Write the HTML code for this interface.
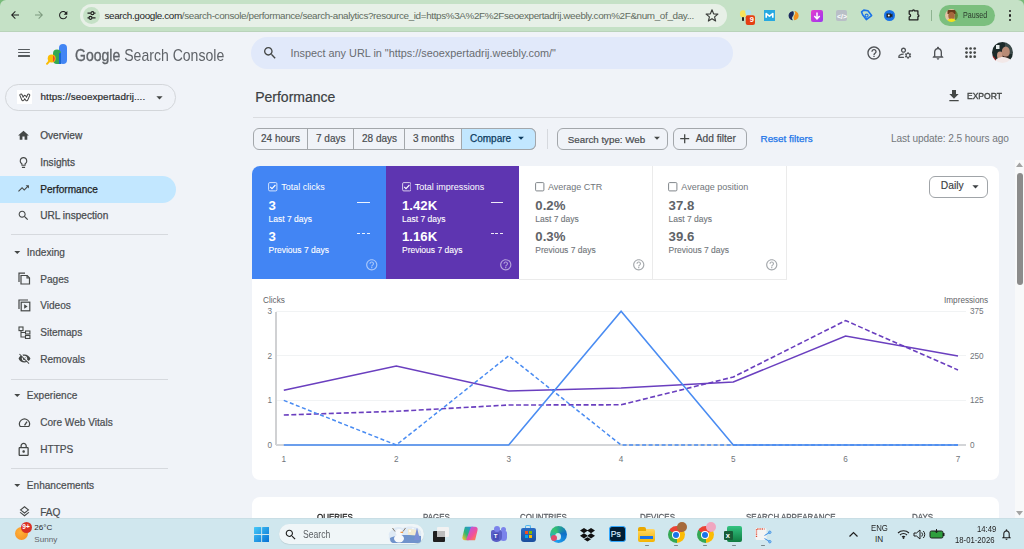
<!DOCTYPE html>
<html><head><meta charset="utf-8"><style>
html,body{margin:0;padding:0;width:1024px;height:549px;overflow:hidden;background:#f0f3f8;font-family:"Liberation Sans",sans-serif;}
.t{position:absolute;white-space:nowrap;line-height:1;}
svg{display:block}
</style></head><body>
<div style="position:absolute;left:0px;top:0px;width:1024px;height:32px;background:#78bb7a"></div>
<div style="position:absolute;left:0px;top:0px;width:1024px;height:32px;background:#c5e1c6;border-radius:6px 6px 0 0"></div>
<div style="position:absolute;left:0px;top:31px;width:1024px;height:1px;background:#b9d3ba"></div>
<svg style="position:absolute;left:8.8px;top:9.2px;" width="12" height="12" viewBox="0 0 24 24"><path fill="#1f1f1f" d="M20 11H7.83l5.59-5.59L12 4l-8 8 8 8 1.41-1.41L7.83 13H20v-2z"/></svg>
<svg style="position:absolute;left:32.7px;top:9.2px;" width="12" height="12" viewBox="0 0 24 24"><path fill="#7d9a7e" d="M12 4l-1.41 1.41L16.17 11H4v2h12.17l-5.58 5.59L12 20l8-8z"/></svg>
<svg style="position:absolute;left:56.7px;top:9.2px;" width="12.4" height="12.4" viewBox="0 0 24 24"><path fill="#1f1f1f" d="M17.65 6.35C16.2 4.9 14.21 4 12 4c-4.42 0-7.99 3.58-7.99 8s3.57 8 7.99 8c3.73 0 6.84-2.55 7.73-6h-2.08c-.82 2.33-3.04 4-5.65 4-3.31 0-6-2.69-6-6s2.69-6 6-6c1.66 0 3.14.69 4.22 1.78L13 11h7V4l-2.35 2.35z"/></svg>
<div style="position:absolute;left:80px;top:4px;width:647px;height:23px;background:#e7f0e7;border-radius:12px"></div>
<div style="position:absolute;left:83px;top:7px;width:17px;height:17px;background:#c5e1c6;border-radius:50%"></div>
<svg style="position:absolute;left:86px;top:10px;" width="11" height="11" viewBox="0 0 11 11"><path d="M1.5 3.2h3.2M8.2 3.2h1.3M1.5 7.8h1.3M6.2 7.8h3.3" stroke="#1f1f1f" stroke-width="1.3" fill="none"/><circle cx="6.4" cy="3.2" r="1.5" stroke="#1f1f1f" stroke-width="1.2" fill="none"/><circle cx="4.5" cy="7.8" r="1.5" stroke="#1f1f1f" stroke-width="1.2" fill="none"/></svg>
<div class="t " style="left:104.5px;top:11.21px;font-size:9.9px;color:#1f1f1f;font-weight:400;letter-spacing:-0.36px">search.google.com<span style="color:#5f6b60">/search-console/performance/search-analytics?resource_id=https%3A%2F%2Fseoexpertadrij.weebly.com%2F&amp;num_of_day...</span></div>
<svg style="position:absolute;left:703.9px;top:8px;" width="16" height="16" viewBox="0 0 16 16"><polygon points="8.00,1.80 9.59,5.82 13.90,6.08 10.57,8.83 11.64,13.02 8.00,10.70 4.36,13.02 5.43,8.83 2.10,6.08 6.41,5.82" fill="none" stroke="#3a3d3a" stroke-width="1.15" stroke-linejoin="round"/></svg>
<svg style="position:absolute;left:738px;top:8px;" width="20" height="19" viewBox="0 0 20 19"><ellipse cx="5" cy="5.8" rx="3.1" ry="3.6" fill="#f7e15c"/><rect x="4" y="9" width="2" height="4" rx=".8" fill="#222"/><circle cx="10.2" cy="4.6" r="2.8" fill="#aee0f5"/><rect x="7.7" y="7.2" width="9.3" height="9.8" rx="2" fill="#e53f12"/></svg>
<div class="t " style="left:749.8px;top:16.45px;font-size:7.5px;color:#fff;font-weight:700;">9</div>
<div style="position:absolute;left:764px;top:10px;width:11px;height:11px;background:#27a9e1"></div>
<svg style="position:absolute;left:764px;top:10px;" width="11" height="11" viewBox="0 0 11 11"><path d="M2.2 7.8V3.6L5.5 6.2 8.8 3.6v4.2" fill="none" stroke="#fff" stroke-width="1.6" stroke-linejoin="round"/></svg>
<svg style="position:absolute;left:787px;top:10px;" width="12" height="11" viewBox="0 0 12 11"><path d="M6.3 1.2C3.6 1 1.5 3.2 1.6 6c.1 2.6 2.2 4.4 4.5 4.3C4.6 9 4.8 7.4 5.8 6.3 6.9 5 7.2 3 6.3 1.2z" fill="#1b2a5e"/><path d="M7.3 10.2c2.6-.1 4.5-2.3 4.3-5C11.4 2.8 9.4 1 7.2 1c1.4 1.3 1.3 2.9.3 4C6.4 6.3 6.3 8.4 7.3 10.2z" fill="#f4911e"/></svg>
<div style="position:absolute;left:811px;top:10px;width:12px;height:12px;background:linear-gradient(135deg,#e73ccf,#9b38ee);border-radius:2px"></div>
<svg style="position:absolute;left:811px;top:10px;" width="12" height="12" viewBox="0 0 12 12"><path d="M6 2.5v6M3.3 6l2.7 2.8L8.7 6" stroke="#fff" stroke-width="1.5" fill="none"/></svg>
<div style="position:absolute;left:836px;top:10px;width:11px;height:11px;background:#b9bfc7;border-radius:2px"></div>
<div class="t " style="left:837px;top:12.57px;font-size:7px;color:#fff;font-weight:700;">&lt;/&gt;</div>
<svg style="position:absolute;left:859px;top:9px;" width="14" height="14" viewBox="0 0 14 14"><path d="M2 3.5L4 1.5h4.2l4.3 4.3-4.7 4.7L3.5 6.2z" fill="none" stroke="#1a73e8" stroke-width="1.6" stroke-linejoin="round" transform="rotate(8 7 7)"/><circle cx="7.6" cy="6.6" r="1.5" fill="none" stroke="#1a73e8" stroke-width="1.1"/></svg>
<div style="position:absolute;left:884px;top:10px;width:11px;height:11px;background:#1a73e8;border-radius:50%"></div>
<svg style="position:absolute;left:886px;top:13px;" width="7" height="5" viewBox="0 0 7 5"><path d="M.5 .5h4.5v4H.5z" fill="#222"/><path d="M5 1.5l1.5-1v4L5 3.5z" fill="#222"/><circle cx="2.8" cy="2.5" r="1" fill="#fff"/></svg>
<svg style="position:absolute;left:907px;top:8px;" width="15" height="15" viewBox="0 0 15 15"><path d="M2.2 2.9H5.5A1 1 0 0 1 7.5 2.9H10.9V6.7A1 1 0 0 1 10.9 8.7V11.8H2.2V8.9A1.4 1.4 0 0 0 2.2 6.1Z" fill="none" stroke="#1f1f1f" stroke-width="1.25" stroke-linejoin="round"/></svg>
<div style="position:absolute;left:931px;top:10px;width:1px;height:11px;background:#8fb391"></div>
<div style="position:absolute;left:939px;top:5px;width:56px;height:21.3px;background:#7bbf7e;border-radius:11px"></div>
<svg style="position:absolute;left:945px;top:8.7px;" width="13" height="13" viewBox="0 0 13 13"><defs><clipPath id="pa"><circle cx="6.5" cy="6.5" r="6.4"/></clipPath><filter id="b3"><feGaussianBlur stdDeviation="0.35"/></filter></defs><g clip-path="url(#pa)" filter="url(#b3)"><rect width="13" height="13" fill="#e3c4a8"/><rect x="9.5" width="4" height="13" fill="#5f8a3a"/><path d="M2.5 1h8v4h-8z" fill="#6b3a1e"/><ellipse cx="6.5" cy="6.8" rx="3.2" ry="3.8" fill="#a8683e"/><path d="M1.5 13c1-3 3-3.5 5-3.5s4 .5 5.5 3.5z" fill="#f2e21c"/></g></svg>
<div class="t " style="left:962.9px;top:10.82px;font-size:8.6px;color:#2b3a2c;font-weight:400;transform:scaleX(0.83);transform-origin:0 0">Paused</div>
<div style="position:absolute;left:1008.5px;top:9.8px;width:2.4px;height:2.4px;background:#1f1f1f;border-radius:50%"></div>
<div style="position:absolute;left:1008.5px;top:14.3px;width:2.4px;height:2.4px;background:#1f1f1f;border-radius:50%"></div>
<div style="position:absolute;left:1008.5px;top:18.8px;width:2.4px;height:2.4px;background:#1f1f1f;border-radius:50%"></div>
<div style="position:absolute;left:0px;top:32px;width:1024px;height:486px;background:#f0f3f8"></div>
<div style="position:absolute;left:18px;top:48.75px;width:12px;height:1.3px;background:#555a5e;border-radius:0.6px"></div>
<div style="position:absolute;left:18px;top:52.1px;width:12px;height:1.3px;background:#555a5e;border-radius:0.6px"></div>
<div style="position:absolute;left:18px;top:55.45px;width:12px;height:1.3px;background:#555a5e;border-radius:0.6px"></div>
<svg style="position:absolute;left:44px;top:43px;" width="24" height="22" viewBox="0 0 24 22"><rect x="15" y="1" width="8" height="20" rx="4" fill="#4285f4"/><path d="M13 6.4a4 4 0 0 1 4 3.6V21h-4a4 4 0 0 1-4-4V10.4a4 4 0 0 1 4-4z" fill="#34a853"/><path d="M15 10h2v11h-2z" fill="#1967d2"/><circle cx="7.7" cy="15.6" r="4" fill="#fbbc04"/><path d="M9 12.3a4 4 0 0 1 0 6.6z" fill="#ea4335"/><path d="M5.2 18.3L3 20.8" stroke="#fbbc04" stroke-width="2" stroke-linecap="round"/></svg>
<div class="t " style="left:75px;top:46.88px;font-size:16.2px;color:#5f6368;font-weight:400;transform:scaleX(0.868);transform-origin:0 0"><b style="font-weight:400;-webkit-text-stroke:0.35px #5f6368">Google</b> Search Console</div>
<div style="position:absolute;left:251px;top:37px;width:482px;height:32px;background:#e1e9fa;border-radius:16px"></div>
<svg style="position:absolute;left:262.3px;top:44.6px;" width="16" height="16" viewBox="0 0 24 24"><path fill="#444746" d="M15.5 14h-.79l-.28-.27C15.41 12.59 16 11.11 16 9.5 16 5.91 13.09 3 9.5 3S3 5.91 3 9.5 5.91 16 9.5 16c1.61 0 3.09-.59 4.23-1.57l.27.28v.79l5 4.99L20.49 19l-4.99-5zm-6 0C7.010 14 5 11.99 5 9.5S7.01 5 9.5 5 14 7.01 14 9.5 11.99 14 9.5 14z"/></svg>
<div class="t " style="left:290.5px;top:47.70px;font-size:10.86px;color:#686c70;font-weight:400;">Inspect any URL in "https://seoexpertadrij.weebly.com/"</div>
<svg style="position:absolute;left:865.7px;top:44.9px;" width="16" height="16" viewBox="0 0 24 24"><path fill="#4f5256" d="M11 18h2v-2h-2v2zm1-16C6.48 2 2 6.48 2 12s4.48 10 10 10 10-4.48 10-10S17.52 2 12 2zm0 18c-4.41 0-8-3.59-8-8s3.59-8 8-8 8 3.59 8 8-3.59 8-8 8zm0-14c-2.21 0-4 1.79-4 4h2c0-1.1.9-2 2-2s2 .9 2 2c0 2-3 1.75-3 5h2c0-2.25 3-2.5 3-5 0-2.21-1.79-4-4-4z"/></svg>
<svg style="position:absolute;left:897.4px;top:45.1px;" width="15.6" height="15.6" viewBox="0 0 24 24"><path fill="#4f5256" d="M4 18v-.65c0-.34.16-.66.41-.81C6.1 15.53 8.03 15 10 15c.03 0 .05 0 .08.01.1-.7.3-1.37.59-1.98-.22-.02-.44-.03-.67-.03-2.42 0-4.68.67-6.61 1.820-.88.52-1.39 1.5-1.39 2.53V20h9.26c-.42-.6-.75-1.28-.97-2H4zM10 12c2.21 0 4-1.79 4-4s-1.79-4-4-4-4 1.79-4 4 1.79 4 4 4zm0-6c1.1 0 2 .9 2 2s-.9 2-2 2-2-.9-2-2 .9-2 2-2zM20.75 16c0-.22-.03-.42-.06-.63l1.14-1.01-1-1.73-1.45.49c-.32-.27-.68-.48-1.08-.63L18 11h-2l-.3 1.49c-.4.15-.76.36-1.08.63l-1.45-.49-1 1.73 1.14 1.01c-.03.21-.06.41-.06.63s.03.42.06.63l-1.14 1.01 1 1.73 1.45-.49c.32.27.68.48 1.08.63L16 21h2l.3-1.49c.4-.15.76-.36 1.08-.63l1.45.49 1-1.73-1.14-1.01c.03-.21.06-.41.06-.63zM17 18c-1.1 0-2-.9-2-2s.9-2 2-2 2 .9 2 2-.9 2-2 2z"/></svg>
<svg style="position:absolute;left:929.5px;top:44.9px;" width="16" height="16" viewBox="0 0 24 24"><path fill="#4f5256" d="M12 22c1.1 0 2-.9 2-2h-4c0 1.1.89 2 2 2zm6-6v-5c0-3.07-1.64-5.64-4.5-6.32V4c0-.83-.67-1.5-1.5-1.5s-1.5.67-1.5 1.5v.68C7.63 5.36 6 7.92 6 11v5l-2 2v1h16v-1l-2-2zm-2 1H8v-6c0-2.48 1.51-4.5 4-4.5s4 2.02 4 4.5v6z"/></svg>
<svg style="position:absolute;left:965.2px;top:47px;" width="13" height="13" viewBox="0 0 13 13"><circle cx="1.50" cy="1.50" r="1.35" fill="#444746"/><circle cx="5.60" cy="1.50" r="1.35" fill="#444746"/><circle cx="9.70" cy="1.50" r="1.35" fill="#444746"/><circle cx="1.50" cy="5.60" r="1.35" fill="#444746"/><circle cx="5.60" cy="5.60" r="1.35" fill="#444746"/><circle cx="9.70" cy="5.60" r="1.35" fill="#444746"/><circle cx="1.50" cy="9.70" r="1.35" fill="#444746"/><circle cx="5.60" cy="9.70" r="1.35" fill="#444746"/><circle cx="9.70" cy="9.70" r="1.35" fill="#444746"/></svg>
<svg style="position:absolute;left:992px;top:42px;" width="21" height="21" viewBox="0 0 21 21"><defs><clipPath id="av"><circle cx="10.5" cy="10.5" r="10.5"/></clipPath><filter id="bl"><feGaussianBlur stdDeviation="0.5"/></filter></defs><g clip-path="url(#av)" filter="url(#bl)"><rect width="21" height="21" fill="#1f2b2b"/><rect x="13" y="0" width="8" height="12" fill="#3a4a48"/><rect x="4" y="3" width="3.5" height="4" fill="#e8eeee"/><ellipse cx="8" cy="13.5" rx="3" ry="4" fill="#c99a86"/><ellipse cx="13.8" cy="10" rx="4" ry="5.5" fill="#b88b76"/><path d="M10.5 13c1 2 5 2 6.5 0l-.5 3h-5.5z" fill="#3a2a24"/><path d="M2 21c1-4 5-6 9-6 3 0 6 1 9 4v2z" fill="#f2e8e8"/><path d="M0 14c2 0 4 2 4 5v2H0z" fill="#9b2020"/></g></svg>
<div style="position:absolute;left:5px;top:84px;width:171px;height:26.5px;border:1px solid #d3d6da;border-radius:13.25px;box-sizing:border-box"></div>
<div style="position:absolute;left:16.8px;top:89.6px;width:15.3px;height:14.4px;background:#fff"></div>
<svg style="position:absolute;left:18.5px;top:93px;" width="12" height="8.6" viewBox="0 0 12 8.6"><path d="M2 2.2L3.9 6.6L5.8 3.6L7.7 6.6L9.6 2.2" fill="none" stroke="#454545" stroke-width="3.3" stroke-linecap="round" stroke-linejoin="round"/><path d="M2 2.2L3.9 6.6L5.8 3.6L7.7 6.6L9.6 2.2" fill="none" stroke="#fff" stroke-width="1.3" stroke-linecap="round" stroke-linejoin="round"/></svg>
<div class="t " style="left:40.5px;top:92.41px;font-size:9.9px;color:#2a2c2e;font-weight:400;-webkit-text-stroke:0.2px #2a2c2e;letter-spacing:0.08px">https://seoexpertadrij....</div>
<svg style="position:absolute;left:152px;top:90px;" width="15" height="15" viewBox="0 0 24 24"><path fill="#444746" d="M7 10l5 5 5-5z"/></svg>
<div style="position:absolute;left:0px;top:175.5px;width:176px;height:27px;background:#c2e7ff;border-radius:0 14px 14px 0"></div>
<div class="t " style="left:40.2px;top:131.45px;font-size:10.1px;color:#4a4d50;font-weight:400;-webkit-text-stroke:0.25px #4a4d50">Overview</div>
<svg style="position:absolute;left:17px;top:129.1px;" width="13" height="13" viewBox="0 0 24 24"><path fill="#444746" d="M10 20v-6h4v6h5v-8h3L12 3 2 12h3v8z"/></svg>
<div class="t " style="left:40.2px;top:158.05px;font-size:10.1px;color:#4a4d50;font-weight:400;-webkit-text-stroke:0.25px #4a4d50">Insights</div>
<svg style="position:absolute;left:17px;top:155.7px;" width="13" height="13" viewBox="0 0 24 24"><path fill="#444746" d="M9 21c0 .55.45 1 1 1h4c.55 0 1-.45 1-1v-1H9v1zm3-19C8.14 2 5 5.14 5 9c0 2.38 1.19 4.470 3 5.74V17c0 .55.45 1 1 1h6c.55 0 1-.45 1-1v-2.26c1.81-1.27 3-3.36 3-5.740 0-3.86-3.14-7-7-7zm2.85 11.1l-.85.6V16h-4v-2.3l-.85-.6C7.8 12.16 7 10.63 7 9c0-2.76 2.24-5 5-5s5 2.24 5 5c0 1.63-.8 3.160-2.15 4.1z"/></svg>
<div class="t " style="left:40.2px;top:184.65px;font-size:10.1px;color:#1f1f1f;font-weight:400;-webkit-text-stroke:0.25px #1f1f1f">Performance</div>
<svg style="position:absolute;left:17px;top:182.3px;" width="13" height="13" viewBox="0 0 24 24"><path fill="#444746" d="M16 6l2.29 2.29-4.88 4.88-4-4L2 16.59 3.41 18l6-6 4 4 6.3-6.29L22 12V6z"/></svg>
<div class="t " style="left:40.2px;top:211.25px;font-size:10.1px;color:#4a4d50;font-weight:400;-webkit-text-stroke:0.25px #4a4d50">URL inspection</div>
<svg style="position:absolute;left:17px;top:208.9px;" width="13" height="13" viewBox="0 0 24 24"><path fill="#444746" d="M15.5 14h-.79l-.28-.27C15.41 12.59 16 11.11 16 9.5 16 5.91 13.09 3 9.5 3S3 5.91 3 9.5 5.91 16 9.5 16c1.61 0 3.09-.59 4.23-1.57l.27.28v.79l5 4.99L20.49 19l-4.99-5zm-6 0C7.010 14 5 11.99 5 9.5S7.01 5 9.5 5 14 7.01 14 9.5 11.99 14 9.5 14z"/></svg>
<div style="position:absolute;left:11px;top:233.5px;width:157px;height:1px;background:#d6d9de"></div>
<div class="t " style="left:26.8px;top:247.85px;font-size:10.1px;color:#4a4d50;font-weight:400;-webkit-text-stroke:0.2px #4a4d50">Indexing</div>
<svg style="position:absolute;left:10.3px;top:244.65px;" width="14.5" height="14.5" viewBox="0 0 24 24"><path fill="#444746" d="M7 10l5 5 5-5z"/></svg>
<div class="t " style="left:40.2px;top:274.65px;font-size:10.1px;color:#4a4d50;font-weight:400;-webkit-text-stroke:0.2px #4a4d50">Pages</div>
<div class="t " style="left:40.2px;top:301.35px;font-size:10.1px;color:#4a4d50;font-weight:400;-webkit-text-stroke:0.2px #4a4d50">Videos</div>
<div class="t " style="left:40.2px;top:327.95px;font-size:10.1px;color:#4a4d50;font-weight:400;-webkit-text-stroke:0.2px #4a4d50">Sitemaps</div>
<div class="t " style="left:40.2px;top:354.65px;font-size:10.1px;color:#4a4d50;font-weight:400;-webkit-text-stroke:0.2px #4a4d50">Removals</div>
<svg style="position:absolute;left:18px;top:272px;" width="13" height="13" viewBox="0 0 13 13"><path d="M3 3.5h6.2l2.3 2.4V12H3z" fill="none" stroke="#444746" stroke-width="1.2"/><path d="M1 10V1.2h6" fill="none" stroke="#444746" stroke-width="1.2"/><path d="M9 3.5v2.5h2.5" fill="none" stroke="#444746" stroke-width="1.1"/></svg>
<svg style="position:absolute;left:18px;top:299px;" width="13" height="13" viewBox="0 0 13 13"><rect x="3.2" y="3.2" width="8.6" height="8.6" fill="none" stroke="#444746" stroke-width="1.2"/><path d="M1 10V1h9" fill="none" stroke="#444746" stroke-width="1.2"/><path d="M6.2 5.2v4.6l3.4-2.3z" fill="#444746"/></svg>
<svg style="position:absolute;left:18px;top:325.5px;" width="13" height="13" viewBox="0 0 13 13"><rect x="1" y="1" width="4" height="3.6" fill="none" stroke="#444746" stroke-width="1.1"/><rect x="7.5" y="5" width="4.4" height="3" fill="none" stroke="#444746" stroke-width="1.1"/><rect x="7.5" y="9.5" width="4.4" height="3" fill="none" stroke="#444746" stroke-width="1.1"/><path d="M3 4.6V11h4.5M3 6.5h4.5" fill="none" stroke="#444746" stroke-width="1.1"/></svg>
<svg style="position:absolute;left:17.5px;top:352px;" width="13" height="13" viewBox="0 0 24 24"><path fill="#444746" d="M12 7c2.76 0 5 2.24 5 5 0 .65-.13 1.26-.36 1.83l2.92 2.92c1.51-1.26 2.7-2.89 3.43-4.75-1.73-4.39-6-7.5-11-7.5-1.4 0-2.74.25-3.98.7l2.16 2.16C10.74 7.13 11.35 7 12 7zM2 4.27l2.28 2.28.46.46C3.08 8.3 1.78 10.02 1 12c1.73 4.39 6 7.5 11 7.5 1.55 0 3.03-.3 4.38-.84l.42.42L19.73 22 21 20.73 3.27 3 2 4.27zM7.53 9.8l1.55 1.55c-.05.21-.08.43-.08.65 0 1.66 1.34 3 3 3 .22 0 .44-.03.65-.08l1.55 1.55c-.67.33-1.41.53-2.2.53-2.76 0-5-2.24-5-5 0-.79.2-1.53.53-2.2zm4.31-.78l3.15 3.15.02-.16c0-1.66-1.34-3-3-3l-.17.01z"/></svg>
<div style="position:absolute;left:11px;top:378.5px;width:157px;height:1px;background:#d6d9de"></div>
<div class="t " style="left:26.8px;top:391.35px;font-size:10.1px;color:#4a4d50;font-weight:400;-webkit-text-stroke:0.2px #4a4d50">Experience</div>
<svg style="position:absolute;left:10.3px;top:388.1px;" width="14.5" height="14.5" viewBox="0 0 24 24"><path fill="#444746" d="M7 10l5 5 5-5z"/></svg>
<div class="t " style="left:40.2px;top:417.85px;font-size:10.1px;color:#4a4d50;font-weight:400;-webkit-text-stroke:0.2px #4a4d50">Core Web Vitals</div>
<svg style="position:absolute;left:18px;top:416px;" width="13" height="13" viewBox="0 0 13 13"><path d="M2.2 10.5A5 5 0 1 1 10.8 10.5z" fill="none" stroke="#444746" stroke-width="1.2"/><path d="M6.5 9.3L9 5.6" stroke="#444746" stroke-width="1.3"/></svg>
<div class="t " style="left:40.2px;top:444.55px;font-size:10.1px;color:#4a4d50;font-weight:400;-webkit-text-stroke:0.2px #4a4d50">HTTPS</div>
<svg style="position:absolute;left:16.4px;top:441.9px;" width="15.3" height="15.3" viewBox="0 0 24 24"><path fill="#444746" d="M18 8h-1V6c0-2.76-2.24-5-5-5S7 3.24 7 6v2H6c-1.1 0-2 .9-2 2v10c0 1.1.9 2 2 2h12c1.1 0 2-.9 2-2V10c0-1.1-.9-2-2-2zM9 6c0-1.66 1.34-3 3-3s3 1.34 3 3v2H9V6zm9 14H6V10h12v10zm-6-3c1.1 0 2-.9 2-2s-.9-2-2-2-2 .9-2 2 .9 2 2 2z"/></svg>
<div style="position:absolute;left:11px;top:468px;width:157px;height:1px;background:#d6d9de"></div>
<div class="t " style="left:26.8px;top:481.45px;font-size:10.1px;color:#4a4d50;font-weight:400;-webkit-text-stroke:0.2px #4a4d50">Enhancements</div>
<svg style="position:absolute;left:10.3px;top:478.2px;" width="14.5" height="14.5" viewBox="0 0 24 24"><path fill="#444746" d="M7 10l5 5 5-5z"/></svg>
<div class="t " style="left:40.2px;top:507.85px;font-size:10.1px;color:#4a4d50;font-weight:400;-webkit-text-stroke:0.2px #4a4d50">FAQ</div>
<svg style="position:absolute;left:17.5px;top:505px;" width="13" height="13" viewBox="0 0 24 24"><path fill="#444746" d="M11.99 18.54l-7.37-5.73L3 14.07l9 7 9-7-1.63-1.27-7.38 5.74zM12 16l7.36-5.73L21 9l-9-7-9 7 1.63 1.27L12 16zm0-11.47L17.74 9 12 13.470 6.26 9 12 4.53z"/></svg>
<div class="t " style="left:255.2px;top:89.64px;font-size:14px;color:#3c4043;font-weight:400;-webkit-text-stroke:0.2px #3c4043">Performance</div>
<svg style="position:absolute;left:945.6px;top:87.5px;" width="16" height="16" viewBox="0 0 24 24"><path fill="#444746" d="M19 9h-4V3H9v6H5l7 7 7-7zM5 18v2h14v-2H5z"/></svg>
<div class="t " style="left:967px;top:91.18px;font-size:9.7px;color:#444746;font-weight:400;-webkit-text-stroke:0.4px #444746;transform:scaleX(0.88);transform-origin:0 0">EXPORT</div>
<div style="position:absolute;left:253px;top:117px;width:771px;height:1px;background:#dadce0"></div>
<div style="position:absolute;left:252.5px;top:128.2px;width:283px;height:21.4px;border:1px solid #a3a7ab;border-radius:6px;box-sizing:border-box;overflow:hidden"></div>
<div style="position:absolute;left:461.7px;top:128.2px;width:74px;height:21.4px;background:#c2e7ff;border:1px solid #a3a7ab;border-left:none;border-radius:0 6px 6px 0;box-sizing:border-box"></div>
<div style="position:absolute;left:307px;top:128.7px;width:1px;height:20.4px;background:#a3a7ab"></div>
<div style="position:absolute;left:353px;top:128.7px;width:1px;height:20.4px;background:#a3a7ab"></div>
<div style="position:absolute;left:404.4px;top:128.7px;width:1px;height:20.4px;background:#a3a7ab"></div>
<div style="position:absolute;left:461.2px;top:128.7px;width:1px;height:20.4px;background:#a3a7ab"></div>
<div class="t " style="left:261px;top:134.13px;font-size:10px;color:#4a4d50;font-weight:400;-webkit-text-stroke:0.2px #4a4d50">24 hours</div>
<div class="t " style="left:316px;top:134.13px;font-size:10px;color:#4a4d50;font-weight:400;-webkit-text-stroke:0.2px #4a4d50">7 days</div>
<div class="t " style="left:362px;top:134.13px;font-size:10px;color:#4a4d50;font-weight:400;-webkit-text-stroke:0.2px #4a4d50">28 days</div>
<div class="t " style="left:413px;top:134.13px;font-size:10px;color:#4a4d50;font-weight:400;-webkit-text-stroke:0.2px #4a4d50">3 months</div>
<div class="t " style="left:470px;top:134.13px;font-size:10px;color:#0b3a5e;font-weight:400;-webkit-text-stroke:0.25px #0b3a5e">Compare</div>
<svg style="position:absolute;left:514px;top:131.3px;" width="14" height="14" viewBox="0 0 24 24"><path fill="#0b3a5e" d="M7 10l5 5 5-5z"/></svg>
<div style="position:absolute;left:546.5px;top:128.5px;width:1px;height:20.5px;background:#d6d9de"></div>
<div style="position:absolute;left:557.4px;top:128.2px;width:110.2px;height:21.4px;border:1px solid #a3a7ab;border-radius:6px;box-sizing:border-box"></div>
<div class="t " style="left:567.8px;top:134.64px;font-size:9.75px;color:#4a4d50;font-weight:400;-webkit-text-stroke:0.2px #4a4d50">Search type: Web</div>
<svg style="position:absolute;left:649.6px;top:131.3px;" width="14" height="14" viewBox="0 0 24 24"><path fill="#444746" d="M7 10l5 5 5-5z"/></svg>
<div style="position:absolute;left:673.3px;top:128.2px;width:73.3px;height:21.4px;border:1px solid #a3a7ab;border-radius:6px;box-sizing:border-box"></div>
<svg style="position:absolute;left:676.6px;top:131.4px;" width="15.4" height="15.4" viewBox="0 0 24 24"><path fill="#444746" d="M19 13h-6v6h-2v-6H5v-2h6V5h2v6h6v2z"/></svg>
<div class="t " style="left:695.7px;top:133.96px;font-size:10.2px;color:#4a4d50;font-weight:400;-webkit-text-stroke:0.2px #4a4d50">Add filter</div>
<div class="t " style="left:760.5px;top:134.21px;font-size:9.9px;color:#1a73e8;font-weight:400;-webkit-text-stroke:0.25px #1a73e8">Reset filters</div>
<div class="t " style="left:891px;top:134.05px;font-size:10.1px;color:#74787c;font-weight:400;letter-spacing:-0.09px">Last update: 2.5 hours ago</div>
<div style="position:absolute;left:252.2px;top:165.5px;width:746.6px;height:314.4px;background:#fff;border-radius:8px"></div>
<div style="position:absolute;left:252.2px;top:165.5px;width:133.8px;height:113.5px;background:#4285f4;border-radius:8px 0 0 0"></div>
<div style="position:absolute;left:386px;top:165.5px;width:133.3px;height:113.5px;background:#5e35b1"></div>
<div style="position:absolute;left:519.3px;top:165.5px;width:133.6px;height:114px;border-right:1px solid #ebebeb;border-bottom:1px solid #ebebeb;box-sizing:border-box"></div>
<div style="position:absolute;left:652.9px;top:165.5px;width:133.8px;height:114px;border-right:1px solid #ebebeb;border-bottom:1px solid #ebebeb;box-sizing:border-box"></div>
<svg style="position:absolute;left:268.2px;top:182px;" width="9.5" height="9.5" viewBox="0 0 9.5 9.5"><rect x="0.6" y="0.6" width="8.3" height="8.3" rx="1.2" fill="none" stroke="rgba(255,255,255,.75)" stroke-width="1"/><path d="M2.2 4.8l1.8 1.8 3.4-3.6" fill="none" stroke="#fff" stroke-width="1.1"/></svg>
<div class="t " style="left:281.2px;top:182.68px;font-size:9px;color:#fff;font-weight:400;">Total clicks</div>
<div class="t " style="left:268.5px;top:199.12px;font-size:13.2px;color:#fff;font-weight:700;">3</div>
<div class="t " style="left:268.5px;top:215.00px;font-size:8.5px;color:#fff;font-weight:400;-webkit-text-stroke:0.1px #fff">Last 7 days</div>
<div class="t " style="left:268.5px;top:230.02px;font-size:13.2px;color:#fff;font-weight:700;">3</div>
<div class="t " style="left:268.5px;top:245.60px;font-size:8.5px;color:#fff;font-weight:400;-webkit-text-stroke:0.1px #fff">Previous 7 days</div>
<svg style="position:absolute;left:365.2px;top:258.2px;" width="13.5" height="13.5" viewBox="0 0 24 24"><path fill="rgba(255,255,255,.55)" d="M11 18h2v-2h-2v2zm1-16C6.48 2 2 6.48 2 12s4.48 10 10 10 10-4.48 10-10S17.52 2 12 2zm0 18c-4.41 0-8-3.59-8-8s3.59-8 8-8 8 3.59 8 8-3.59 8-8 8zm0-14c-2.21 0-4 1.79-4 4h2c0-1.1.9-2 2-2s2 .9 2 2c0 2-3 1.75-3 5h2c0-2.25 3-2.5 3-5 0-2.21-1.79-4-4-4z"/></svg>
<div style="position:absolute;left:357.3px;top:202.1px;width:12.7px;height:1.4px;background:rgba(255,255,255,.9)"></div>
<div style="position:absolute;left:357.3px;top:233.1px;width:3.0px;height:1.4px;background:rgba(255,255,255,.9)"></div>
<div style="position:absolute;left:361.90000000000003px;top:233.1px;width:3.0px;height:1.4px;background:rgba(255,255,255,.9)"></div>
<div style="position:absolute;left:366.5px;top:233.1px;width:3.0px;height:1.4px;background:rgba(255,255,255,.9)"></div>
<svg style="position:absolute;left:401.7px;top:182px;" width="9.5" height="9.5" viewBox="0 0 9.5 9.5"><rect x="0.6" y="0.6" width="8.3" height="8.3" rx="1.2" fill="none" stroke="rgba(255,255,255,.75)" stroke-width="1"/><path d="M2.2 4.8l1.8 1.8 3.4-3.6" fill="none" stroke="#fff" stroke-width="1.1"/></svg>
<div class="t " style="left:414.7px;top:182.68px;font-size:9px;color:#fff;font-weight:400;">Total impressions</div>
<div class="t " style="left:402px;top:199.12px;font-size:13.2px;color:#fff;font-weight:700;">1.42K</div>
<div class="t " style="left:402px;top:215.00px;font-size:8.5px;color:#fff;font-weight:400;-webkit-text-stroke:0.1px #fff">Last 7 days</div>
<div class="t " style="left:402px;top:230.02px;font-size:13.2px;color:#fff;font-weight:700;">1.16K</div>
<div class="t " style="left:402px;top:245.60px;font-size:8.5px;color:#fff;font-weight:400;-webkit-text-stroke:0.1px #fff">Previous 7 days</div>
<svg style="position:absolute;left:498.7px;top:258.2px;" width="13.5" height="13.5" viewBox="0 0 24 24"><path fill="rgba(255,255,255,.55)" d="M11 18h2v-2h-2v2zm1-16C6.48 2 2 6.48 2 12s4.48 10 10 10 10-4.48 10-10S17.52 2 12 2zm0 18c-4.41 0-8-3.59-8-8s3.59-8 8-8 8 3.59 8 8-3.59 8-8 8zm0-14c-2.21 0-4 1.79-4 4h2c0-1.1.9-2 2-2s2 .9 2 2c0 2-3 1.75-3 5h2c0-2.25 3-2.5 3-5 0-2.21-1.79-4-4-4z"/></svg>
<div style="position:absolute;left:490.8px;top:202.1px;width:12.7px;height:1.4px;background:rgba(255,255,255,.9)"></div>
<div style="position:absolute;left:490.8px;top:233.1px;width:3.0px;height:1.4px;background:rgba(255,255,255,.9)"></div>
<div style="position:absolute;left:495.40000000000003px;top:233.1px;width:3.0px;height:1.4px;background:rgba(255,255,255,.9)"></div>
<div style="position:absolute;left:500.0px;top:233.1px;width:3.0px;height:1.4px;background:rgba(255,255,255,.9)"></div>
<svg style="position:absolute;left:535.0px;top:182px;" width="9.5" height="9.5" viewBox="0 0 9.5 9.5"><rect x="0.6" y="0.6" width="8.3" height="8.3" rx="1" fill="none" stroke="#80868b" stroke-width="1"/></svg>
<div class="t " style="left:548.0px;top:182.68px;font-size:9px;color:#70757a;font-weight:400;">Average CTR</div>
<div class="t " style="left:535.3px;top:199.12px;font-size:13.2px;color:#5f6368;font-weight:700;">0.2%</div>
<div class="t " style="left:535.3px;top:215.00px;font-size:8.5px;color:#70757a;font-weight:400;-webkit-text-stroke:0.1px #70757a">Last 7 days</div>
<div class="t " style="left:535.3px;top:230.02px;font-size:13.2px;color:#5f6368;font-weight:700;">0.3%</div>
<div class="t " style="left:535.3px;top:245.60px;font-size:8.5px;color:#70757a;font-weight:400;-webkit-text-stroke:0.1px #70757a">Previous 7 days</div>
<svg style="position:absolute;left:632.0px;top:258.2px;" width="13.5" height="13.5" viewBox="0 0 24 24"><path fill="#a4a8ac" d="M11 18h2v-2h-2v2zm1-16C6.48 2 2 6.48 2 12s4.48 10 10 10 10-4.48 10-10S17.52 2 12 2zm0 18c-4.41 0-8-3.59-8-8s3.59-8 8-8 8 3.59 8 8-3.59 8-8 8zm0-14c-2.21 0-4 1.79-4 4h2c0-1.1.9-2 2-2s2 .9 2 2c0 2-3 1.75-3 5h2c0-2.25 3-2.5 3-5 0-2.21-1.79-4-4-4z"/></svg>
<svg style="position:absolute;left:668.3000000000001px;top:182px;" width="9.5" height="9.5" viewBox="0 0 9.5 9.5"><rect x="0.6" y="0.6" width="8.3" height="8.3" rx="1" fill="none" stroke="#80868b" stroke-width="1"/></svg>
<div class="t " style="left:681.3000000000001px;top:182.68px;font-size:9px;color:#70757a;font-weight:400;">Average position</div>
<div class="t " style="left:668.6px;top:199.12px;font-size:13.2px;color:#5f6368;font-weight:700;">37.8</div>
<div class="t " style="left:668.6px;top:215.00px;font-size:8.5px;color:#70757a;font-weight:400;-webkit-text-stroke:0.1px #70757a">Last 7 days</div>
<div class="t " style="left:668.6px;top:230.02px;font-size:13.2px;color:#5f6368;font-weight:700;">39.6</div>
<div class="t " style="left:668.6px;top:245.60px;font-size:8.5px;color:#70757a;font-weight:400;-webkit-text-stroke:0.1px #70757a">Previous 7 days</div>
<svg style="position:absolute;left:765.3000000000001px;top:258.2px;" width="13.5" height="13.5" viewBox="0 0 24 24"><path fill="#a4a8ac" d="M11 18h2v-2h-2v2zm1-16C6.48 2 2 6.48 2 12s4.48 10 10 10 10-4.48 10-10S17.52 2 12 2zm0 18c-4.41 0-8-3.59-8-8s3.59-8 8-8 8 3.59 8 8-3.59 8-8 8zm0-14c-2.21 0-4 1.79-4 4h2c0-1.1.9-2 2-2s2 .9 2 2c0 2-3 1.75-3 5h2c0-2.25 3-2.5 3-5 0-2.21-1.79-4-4-4z"/></svg>
<div style="position:absolute;left:929px;top:176px;width:59px;height:21.6px;border:1px solid #a0a4a8;border-radius:6px;box-sizing:border-box"></div>
<div class="t " style="left:940.8px;top:181.48px;font-size:10.3px;color:#3c4043;font-weight:400;-webkit-text-stroke:0.15px #3c4043">Daily</div>
<svg style="position:absolute;left:967.8px;top:179.4px;" width="15" height="15" viewBox="0 0 24 24"><path fill="#3c4043" d="M7 10l5 5 5-5z"/></svg>
<div class="t " style="left:263px;top:297.05px;font-size:8.2px;color:#5f6368;font-weight:400;">Clicks</div>
<div class="t " style="left:944px;top:297.05px;font-size:8.2px;color:#5f6368;font-weight:400;">Impressions</div>
<div style="position:absolute;left:276px;top:310.7px;width:690px;height:1px;background:#f1f3f4"></div>
<div class="t " style="left:267.5px;top:308.15px;font-size:8.2px;color:#70757a;font-weight:400;">3</div>
<div style="position:absolute;left:276px;top:355.3px;width:690px;height:1px;background:#f1f3f4"></div>
<div class="t " style="left:267.5px;top:352.75px;font-size:8.2px;color:#70757a;font-weight:400;">2</div>
<div style="position:absolute;left:276px;top:399.9px;width:690px;height:1px;background:#f1f3f4"></div>
<div class="t " style="left:267.5px;top:397.35px;font-size:8.2px;color:#70757a;font-weight:400;">1</div>
<div style="position:absolute;left:276px;top:444.5px;width:690px;height:1px;background:#f1f3f4"></div>
<div class="t " style="left:267.5px;top:441.95px;font-size:8.2px;color:#70757a;font-weight:400;">0</div>
<div class="t " style="left:970px;top:308.15px;font-size:8.2px;color:#70757a;font-weight:400;">375</div>
<div class="t " style="left:970px;top:352.75px;font-size:8.2px;color:#70757a;font-weight:400;">250</div>
<div class="t " style="left:970px;top:397.35px;font-size:8.2px;color:#70757a;font-weight:400;">125</div>
<div class="t " style="left:970px;top:441.95px;font-size:8.2px;color:#70757a;font-weight:400;">0</div>
<div style="position:absolute;left:275px;top:311.6px;width:1.9px;height:133.4px;background:#d0d1d3"></div>
<div style="position:absolute;left:276px;top:444.4px;width:690px;height:1.2px;background:#d3d5d8"></div>
<div class="t " style="left:281.5px;top:455.75px;font-size:8.2px;color:#70757a;font-weight:400;">1</div>
<div class="t " style="left:394.0px;top:455.75px;font-size:8.2px;color:#70757a;font-weight:400;">2</div>
<div class="t " style="left:506.4px;top:455.75px;font-size:8.2px;color:#70757a;font-weight:400;">3</div>
<div class="t " style="left:618.8000000000001px;top:455.75px;font-size:8.2px;color:#70757a;font-weight:400;">4</div>
<div class="t " style="left:731.0px;top:455.75px;font-size:8.2px;color:#70757a;font-weight:400;">5</div>
<div class="t " style="left:843.3000000000001px;top:455.75px;font-size:8.2px;color:#70757a;font-weight:400;">6</div>
<div class="t " style="left:955.7px;top:455.75px;font-size:8.2px;color:#70757a;font-weight:400;">7</div>
<svg style="position:absolute;left:0px;top:0px;pointer-events:none" width="1024" height="549" viewBox="0 0 1024 549"><polyline points="283.8,415 396.3,411.3 508.7,405 621.1,404.8 733.3,377 845.6,320.6 958,370" fill="none" stroke="#6a3fbf" stroke-width="1.6" stroke-dasharray="5 2.5"/>
<polyline points="283.8,390.3 396.3,366 508.7,391 621.1,388 733.3,382 845.6,336 958,356" fill="none" stroke="#6a3fbf" stroke-width="1.6"/>
<polyline points="283.8,400.4 396.3,445 508.7,355.8 621.1,445 733.3,445 845.6,445 958,445" fill="none" stroke="#4a8cf2" stroke-width="1.5" stroke-dasharray="4 2.5"/>
<polyline points="283.8,445 396.3,445 508.7,445 621.1,311.2 733.3,445 845.6,445 958,445" fill="none" stroke="#4a8cf2" stroke-width="1.6"/></svg>
<div style="position:absolute;left:252.2px;top:496.5px;width:746.6px;height:60px;background:#fff;border-radius:8px"></div>
<div class="t " style="left:316.6px;top:512.04px;font-size:9.4px;color:#1f1f1f;font-weight:400;-webkit-text-stroke:0.3px #1f1f1f;transform:scaleX(0.85);transform-origin:0 0">QUERIES</div>
<div class="t " style="left:422.8px;top:512.04px;font-size:9.4px;color:#5f6368;font-weight:400;-webkit-text-stroke:0.3px #5f6368;transform:scaleX(0.85);transform-origin:0 0">PAGES</div>
<div class="t " style="left:520px;top:512.04px;font-size:9.4px;color:#5f6368;font-weight:400;-webkit-text-stroke:0.3px #5f6368;transform:scaleX(0.85);transform-origin:0 0">COUNTRIES</div>
<div class="t " style="left:639.6px;top:512.04px;font-size:9.4px;color:#5f6368;font-weight:400;-webkit-text-stroke:0.3px #5f6368;transform:scaleX(0.85);transform-origin:0 0">DEVICES</div>
<div class="t " style="left:745.5px;top:512.04px;font-size:9.4px;color:#5f6368;font-weight:400;-webkit-text-stroke:0.3px #5f6368;transform:scaleX(0.85);transform-origin:0 0">SEARCH APPEARANCE</div>
<div class="t " style="left:912.3px;top:512.04px;font-size:9.4px;color:#5f6368;font-weight:400;-webkit-text-stroke:0.3px #5f6368;transform:scaleX(0.85);transform-origin:0 0">DAYS</div>
<div style="position:absolute;left:1014.7px;top:160px;width:9.3px;height:358px;background:#f8f9fa"></div>
<svg style="position:absolute;left:1015px;top:161px;" width="9" height="7" viewBox="0 0 9 7"><path d="M1 6h7L4.5 1.5z" fill="#a3a3a3"/></svg>
<div style="position:absolute;left:1017px;top:172.5px;width:6px;height:112px;background:#8b8b8b;border-radius:3px"></div>
<svg style="position:absolute;left:1015px;top:509.5px;" width="9" height="7" viewBox="0 0 9 7"><path d="M1 1h7L4.5 5.5z" fill="#a3a3a3"/></svg>
<div style="position:absolute;left:0px;top:518px;width:1024px;height:31px;background:#d0e7ee"></div>
<div style="position:absolute;left:0px;top:517.6px;width:1024px;height:0.8px;background:#c9dee5"></div>
<div style="position:absolute;left:15px;top:527px;width:13px;height:13px;background:radial-gradient(circle at 40% 40%,#ffb23a,#f5891f);border-radius:50%"></div>
<div style="position:absolute;left:20.5px;top:521.5px;width:11px;height:11px;background:#d93025;border-radius:50%"></div>
<div class="t " style="left:22.3px;top:524.49px;font-size:6.5px;color:#fff;font-weight:700;">9+</div>
<div class="t " style="left:34.3px;top:524.44px;font-size:8.1px;color:#2a2a2a;font-weight:400;">26°C</div>
<div class="t " style="left:34.3px;top:535.54px;font-size:8.1px;color:#5f6368;font-weight:400;">Sunny</div>
<svg style="position:absolute;left:253.6px;top:526.8px;" width="15.3" height="15.2" viewBox="0 0 15.3 15.2"><defs><linearGradient id="wg" gradientUnits="userSpaceOnUse" x1="0" y1="0" x2="15.3" y2="15.2"><stop offset="0" stop-color="#45c8f7"/><stop offset="1" stop-color="#0670d4"/></linearGradient></defs><g fill="url(#wg)"><rect x="0" y="0" width="7.2" height="7.1" rx=".6"/><rect x="8.1" y="0" width="7.2" height="7.1" rx=".6"/><rect x="0" y="8.1" width="7.2" height="7.1" rx=".6"/><rect x="8.1" y="8.1" width="7.2" height="7.1" rx=".6"/></g></svg>
<div style="position:absolute;left:279px;top:523.9px;width:145px;height:20.3px;background:#f0f6f8;border-radius:10.15px;box-shadow:0 0.6px 0.8px rgba(0,0,0,.12)"></div>
<svg style="position:absolute;left:284px;top:528px;" width="13.5" height="13.5" viewBox="0 0 24 24"><path fill="#1f1f1f" d="M15.5 14h-.79l-.28-.27C15.41 12.59 16 11.11 16 9.5 16 5.91 13.09 3 9.5 3S3 5.91 3 9.5 5.91 16 9.5 16c1.61 0 3.09-.59 4.23-1.57l.27.28v.79l5 4.99L20.49 19l-4.99-5zm-6 0C7.010 14 5 11.99 5 9.5S7.01 5 9.5 5 14 7.01 14 9.5 11.99 14 9.5 14z"/></svg>
<div class="t " style="left:302.8px;top:529.63px;font-size:10px;color:#5b5f63;font-weight:400;transform:scaleX(0.86);transform-origin:0 0">Search</div>
<svg style="position:absolute;left:387.5px;top:524.5px;" width="35" height="19" viewBox="0 0 35 19"><defs><filter id="b2"><feGaussianBlur stdDeviation="0.45"/></filter></defs><g filter="url(#b2)"><path d="M3 6c2-4 8-5 12-3 4-2 10-2 14 0 4 1 5 5 4 8 1 3-1 6-4 6H6c-4 0-6-3-5-6C0 9 1 7 3 6z" fill="#dfeaf5"/><path d="M20 4c3 0 9 0 11 3v5H20z" fill="#f4ead0"/><path d="M2 13c6-3 14-4 31-2v4c0 2-1 3-3 3H6c-3 0-4-2-4-5z" fill="#6f93cc"/><ellipse cx="11" cy="13.5" rx="5" ry="4" fill="#f7f9fb"/><circle cx="11" cy="7.2" r="3.3" fill="#f7f9fb"/><path d="M12.5 7.3h2.6" stroke="#f08a2a" stroke-width="1.1"/><path d="M7 6.5L4.5 3M15 6.5l2.5-3.5" stroke="#6b5a4a" stroke-width=".8"/><path d="M29 2.5l-3 12.5h6z" fill="#7b8fd6"/><circle cx="22" cy="6" r="1" fill="#fff"/><circle cx="25" cy="3.5" r=".7" fill="#fff"/></g></svg>
<div style="position:absolute;left:436.7px;top:526.6px;width:12.3px;height:10.4px;background:#f2f2f2;border-radius:1px"></div>
<div style="position:absolute;left:433px;top:531px;width:12px;height:10.6px;background:#1f1f1f;border-radius:1px"></div>
<div style="position:absolute;left:436.7px;top:531px;width:8.3px;height:6px;background:#bdbdbd"></div>
<svg style="position:absolute;left:462px;top:526px;" width="16" height="15" viewBox="0 0 16 15"><defs><linearGradient id="cg1" x1="0" y1="1" x2="1" y2="0"><stop offset="0" stop-color="#f5c12e"/><stop offset=".4" stop-color="#2bb673"/><stop offset="1" stop-color="#2a8cf0"/></linearGradient><linearGradient id="cg2" x1="0" y1="0" x2="1" y2="1"><stop offset="0" stop-color="#a45cf2"/><stop offset=".6" stop-color="#f2509a"/><stop offset="1" stop-color="#ff8a3d"/></linearGradient></defs><path d="M3.5 1.5h7.5l-4.5 12H3C1.5 13.5.8 12.3 1.2 11l2.3-9.5z" fill="url(#cg1)" stroke="url(#cg1)" stroke-width="1.5" stroke-linejoin="round"/><path d="M12.5 13.5H5l4.5-12H13c1.5 0 2.2 1.2 1.8 2.5l-2.3 9.5z" fill="url(#cg2)" stroke="url(#cg2)" stroke-width="1.5" stroke-linejoin="round"/></svg>
<div style="position:absolute;left:499.5px;top:531px;width:7.5px;height:10px;background:#7b83eb;border-radius:2px 2px 4px 4px"></div>
<div style="position:absolute;left:491.4px;top:530px;width:10.5px;height:12px;background:#5b5fc7;border-radius:2px 2px 5px 5px"></div>
<div style="position:absolute;left:494px;top:526px;width:6px;height:6px;background:#7b83eb;border-radius:50%"></div>
<div style="position:absolute;left:501px;top:527px;width:5px;height:5px;background:#7b83eb;border-radius:50%"></div>
<div style="position:absolute;left:492.5px;top:533px;width:6px;height:6.5px;background:#464eb8;border-radius:1px"></div>
<div class="t " style="left:493.8px;top:533.22px;font-size:6px;color:#fff;font-weight:700;">T</div>
<div style="position:absolute;left:525px;top:524.5px;width:6px;height:4px;border:1.2px solid #4fb6f0;border-bottom:none;border-radius:2px 2px 0 0;box-sizing:border-box"></div>
<div style="position:absolute;left:520.5px;top:527.5px;width:15.5px;height:14.5px;background:linear-gradient(#2a6cc4,#1b4f9e);border-radius:2px 2px 3px 3px"></div>
<div style="position:absolute;left:525px;top:531px;width:3px;height:3px;background:#f25022"></div>
<div style="position:absolute;left:528.5px;top:531px;width:3px;height:3px;background:#7fba00"></div>
<div style="position:absolute;left:525px;top:534.5px;width:3px;height:3px;background:#00a4ef"></div>
<div style="position:absolute;left:528.5px;top:534.5px;width:3px;height:3px;background:#ffb900"></div>
<div style="position:absolute;left:550px;top:526px;width:17px;height:17px;background:conic-gradient(from 200deg,#1da1f2,#36c46f,#0f6fc7,#1da1f2);border-radius:50%"></div>
<div style="position:absolute;left:555px;top:533px;width:6px;height:7px;background:#d0e7ee;border-radius:50%"></div>
<div style="position:absolute;left:551px;top:535px;width:6px;height:6px;background:#e04b6b;border-radius:50%"></div>
<svg style="position:absolute;left:579px;top:527px;" width="17" height="15" viewBox="0 0 17 17"><path d="M4.5 1L0 4l4.5 3L9 4zM12.5 1L8 4l4.5 3L17 4zM0 10l4.5 3L9 10 4.5 7zM17 10l-4.5 3L8 10l4.5-3zM4.5 14l4 2.5 4-2.5-4-2.5z" fill="#111"/></svg>
<div style="position:absolute;left:608.5px;top:526px;width:17px;height:16px;background:#001e36;border-radius:3px;border:1px solid #31a8ff;box-sizing:border-box"></div>
<div class="t " style="left:610.8px;top:530.30px;font-size:8.5px;color:#d6ecff;font-weight:400;-webkit-text-stroke:0.2px #d6ecff">Ps</div>
<div style="position:absolute;left:638px;top:529px;width:17px;height:13px;background:linear-gradient(#ffd766,#f4b400);border-radius:2px"></div>
<div style="position:absolute;left:638px;top:527px;width:8px;height:4px;background:#e9a800;border-radius:2px 2px 0 0"></div>
<div style="position:absolute;left:640px;top:536px;width:13px;height:3px;background:#1a73e8"></div>
<div style="position:absolute;left:644.5px;top:545px;width:4px;height:1.4px;background:#7a878b;border-radius:1px"></div>
<div style="position:absolute;left:667.8px;top:526px;width:17px;height:17px;background:conic-gradient(from -60deg,#ea4335 0 120deg,#fbbc04 120deg 240deg,#34a853 240deg 360deg);border-radius:50%"></div>
<div style="position:absolute;left:672.3px;top:530.5px;width:8px;height:8px;background:#fff;border-radius:50%"></div>
<div style="position:absolute;left:673.3px;top:531.5px;width:6px;height:6px;background:#1a73e8;border-radius:50%"></div>
<div style="position:absolute;left:676.8px;top:521.5px;width:10.5px;height:10.5px;background:#a66a3b;border-radius:50%"></div>
<div style="position:absolute;left:674.3px;top:545px;width:4px;height:1.4px;background:#7a878b;border-radius:1px"></div>
<div style="position:absolute;left:696.5px;top:526px;width:17px;height:17px;background:conic-gradient(from -60deg,#ea4335 0 120deg,#fbbc04 120deg 240deg,#34a853 240deg 360deg);border-radius:50%"></div>
<div style="position:absolute;left:701px;top:530.5px;width:8px;height:8px;background:#fff;border-radius:50%"></div>
<div style="position:absolute;left:702px;top:531.5px;width:6px;height:6px;background:#1a73e8;border-radius:50%"></div>
<div style="position:absolute;left:705.5px;top:521.5px;width:10.5px;height:10.5px;background:#f0a7c0;border-radius:50%"></div>
<div style="position:absolute;left:703px;top:545px;width:4px;height:1.4px;background:#7a878b;border-radius:1px"></div>
<div style="position:absolute;left:727px;top:526px;width:15px;height:16px;background:linear-gradient(#33c481,#107c41);border-radius:2px"></div>
<div style="position:absolute;left:724px;top:531px;width:9px;height:9px;background:#185c37;border-radius:1px"></div>
<div class="t " style="left:725.8px;top:532.15px;font-size:7.5px;color:#fff;font-weight:700;">x</div>
<div style="position:absolute;left:731.5px;top:545px;width:4px;height:1.4px;background:#7a878b;border-radius:1px"></div>
<svg style="position:absolute;left:754px;top:526px;" width="18" height="18" viewBox="0 0 18 18"><rect x="1.5" y="2" width="11" height="12" rx="1.5" fill="#f4f4f4"/><path d="M2.5 11V3h8" fill="none" stroke="#e0452b" stroke-width="1.3" stroke-dasharray="1.2 1"/><path d="M10.5 9.5l5-3M10.5 12.5l5 3" stroke="#3a8ee6" stroke-width="1"/><circle cx="15.8" cy="6.3" r="1.2" fill="none" stroke="#3a8ee6"/><circle cx="15.8" cy="15.7" r="1.2" fill="none" stroke="#3a8ee6"/></svg>
<div style="position:absolute;left:761px;top:545px;width:4px;height:1.4px;background:#7a878b;border-radius:1px"></div>
<svg style="position:absolute;left:848px;top:529.5px;" width="11" height="8" viewBox="0 0 11 8"><path d="M1.5 6.5L5.5 2.5l4 4" fill="none" stroke="#1f1f1f" stroke-width="1.2"/></svg>
<div class="t " style="left:870.8px;top:525.25px;font-size:8.2px;color:#1f1f1f;font-weight:400;transform:scaleX(0.95);transform-origin:0 0">ENG</div>
<div class="t " style="left:875px;top:536.05px;font-size:8.2px;color:#1f1f1f;font-weight:400;">IN</div>
<svg style="position:absolute;left:897px;top:529px;" width="13" height="10" viewBox="0 0 13 10"><path d="M1 4a8 8 0 0 1 11 0M3 6a5 5 0 0 1 7 0M5 8a2.2 2.2 0 0 1 3 0" fill="none" stroke="#1f1f1f" stroke-width="1.1"/><circle cx="6.5" cy="9" r=".9" fill="#1f1f1f"/></svg>
<svg style="position:absolute;left:913px;top:528.5px;" width="13" height="11" viewBox="0 0 13 11"><path d="M1 4h2.5L7 1v9L3.5 7H1z" fill="none" stroke="#1f1f1f" stroke-width="1"/><path d="M8.7 3.5a3 3 0 0 1 0 4M10.3 2a5 5 0 0 1 0 7" fill="none" stroke="#1f1f1f" stroke-width="1"/></svg>
<svg style="position:absolute;left:929px;top:528px;" width="16" height="12" viewBox="0 0 16 12"><rect x="1" y="3" width="13" height="7" rx="1.5" fill="#2e9e3e" stroke="#1f1f1f" stroke-width="1"/><rect x="14" y="5" width="1.5" height="3" fill="#1f1f1f"/><path d="M7.5 1v3.5M6 3.2l1.5 1.6L9 3.2" fill="none" stroke="#1f1f1f" stroke-width="1"/></svg>
<div class="t " style="left:977.4px;top:525.17px;font-size:8.3px;color:#1f1f1f;font-weight:400;transform:scaleX(0.93);transform-origin:0 0">14:49</div>
<div class="t " style="left:955px;top:535.57px;font-size:8.3px;color:#1f1f1f;font-weight:400;transform:scaleX(0.93);transform-origin:0 0">18-01-2026</div>
<svg style="position:absolute;left:1000px;top:528px;" width="13" height="13" viewBox="0 0 24 24"><path fill="#1f1f1f" d="M12 22c1.1 0 2-.9 2-2h-4c0 1.1.89 2 2 2zm6-6v-5c0-3.07-1.64-5.64-4.5-6.32V4c0-.83-.67-1.5-1.5-1.5s-1.5.67-1.5 1.5v.68C7.63 5.36 6 7.92 6 11v5l-2 2v1h16v-1l-2-2zm-2 1H8v-6c0-2.48 1.51-4.5 4-4.5s4 2.02 4 4.5v6z"/></svg>
</body></html>
